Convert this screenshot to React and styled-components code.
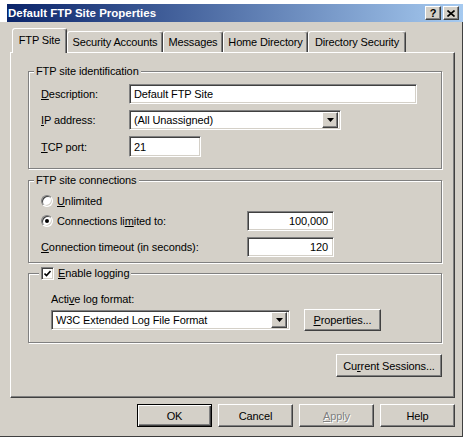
import styled, { createGlobalStyle, css } from "styled-components"

const GlobalStyle = createGlobalStyle`
  * { box-sizing: border-box; }
  html, body {
    margin: 0;
    padding: 0;
    background: #ffffff;
  }
  body {
    font-family: "Liberation Sans", Arial, sans-serif;
    font-size: 11px;
    color: #000000;
  }
`

const raised = css`
  border: 1px solid;
  border-color: #ffffff #404040 #404040 #ffffff;
  box-shadow: inset -1px -1px 0 #808080;
`

const sunken = css`
  border: 1px solid;
  border-color: #808080 #ffffff #ffffff #808080;
  box-shadow: inset 1px 1px 0 #404040, inset -1px -1px 0 #d4d0c8;
`

const Window = styled.div`
  margin-top: 4px;
  width: 463px;
  display: flex;
  flex-direction: column;
`

const TitleBar = styled.div`
  margin-left: 7px;
  height: 18px;
  background: linear-gradient(to right, #0a246a, #a6caf0);
  display: flex;
  align-items: center;
  justify-content: space-between;
  padding: 0 4px 0 1px;
`

const TitleText = styled.span`
  color: #ffffff;
  font-weight: 700;
  font-size: 11.5px;
  letter-spacing: 0;
`

const TitleButtons = styled.div`
  display: flex;
  gap: 2px;
`

const TitleButton = styled.div`
  ${raised};
  width: 16px;
  height: 14px;
  background: #d4d0c8;
  display: flex;
  align-items: center;
  justify-content: center;
  font-weight: 700;
  font-size: 11px;
  line-height: 1;
`

const Body = styled.div`
  height: 415px;
  background: #d4d0c8;
  border-right: 1px solid #404040;
  border-bottom: 1px solid #404040;
  padding: 6px 7px 9px 10px;
  display: flex;
  flex-direction: column;
`

const TabStrip = styled.div`
  height: 24px;
  padding-left: 2px;
  display: flex;
  align-items: flex-end;
  position: relative;
  z-index: 1;
`

const Tab = styled.div`
  width: ${(p) => p.$w}px;
  height: ${(p) => (p.$active ? 25 : 21)}px;
  margin-bottom: ${(p) => (p.$active ? -1 : 0)}px;
  background: #d4d0c8;
  border: 1px solid;
  border-bottom: none;
  border-color: #ffffff #404040 transparent #ffffff;
  border-radius: 3px 3px 0 0;
  box-shadow: inset -1px 0 0 #808080;
  display: flex;
  align-items: center;
  justify-content: center;
  padding-bottom: ${(p) => (p.$active ? 3 : 0)}px;
  white-space: nowrap;
  letter-spacing: -0.15px;
`

const Panel = styled.div`
  height: 346px;
  ${raised};
  padding: 18px 12px 0 17px;
  display: flex;
  flex-direction: column;
`

const Group = styled.div`
  position: relative;
  border: 1px solid #808080;
  box-shadow: inset 1px 1px 0 #ffffff, 1px 1px 0 #ffffff;
  padding: ${(p) => p.$pad};
  margin-bottom: ${(p) => p.$mb || 0}px;
  display: flex;
  flex-direction: column;
  gap: ${(p) => p.$gap || 0}px;
`

const Legend = styled.div`
  position: absolute;
  top: -7px;
  left: ${(p) => p.$left}px;
  padding: 0 2px;
  line-height: 13px;
  background: #d4d0c8;
  display: flex;
  align-items: center;
  gap: 4px;
  letter-spacing: -0.1px;
`

const Row = styled.div`
  display: flex;
  align-items: center;
  height: ${(p) => p.$h || 20}px;
  margin-top: ${(p) => p.$mt || 0}px;
`

const Label = styled.div`
  width: ${(p) => p.$w}px;
  display: flex;
  align-items: center;
  gap: 4px;
  letter-spacing: -0.1px;
  white-space: nowrap;
`

const Key = styled.span`
  text-decoration: underline;
`

const TextBox = styled.div`
  ${sunken};
  width: ${(p) => p.$w}px;
  height: ${(p) => p.$h || 20}px;
  background: #ffffff;
  display: flex;
  align-items: center;
  justify-content: ${(p) => (p.$right ? "flex-end" : "space-between")};
  padding: ${(p) => (p.$right ? "0 5px 0 4px" : "0 2px 0 4px")};
  white-space: nowrap;
  letter-spacing: -0.1px;
`

const DropButton = styled.div`
  ${raised};
  width: 16px;
  height: 16px;
  background: #d4d0c8;
  display: flex;
  align-items: center;
  justify-content: center;
`

const Radio = styled.span`
  ${sunken};
  width: 12px;
  height: 12px;
  border-radius: 50%;
  background: #ffffff;
  display: inline-flex;
  align-items: center;
  justify-content: center;
  flex-shrink: 0;
  &::after {
    content: "";
    width: 4px;
    height: 4px;
    border-radius: 50%;
    background: ${(p) => (p.$checked ? "#000000" : "transparent")};
  }
`

const Check = styled.span`
  ${sunken};
  width: 13px;
  height: 13px;
  background: #ffffff;
  display: inline-flex;
  align-items: center;
  justify-content: center;
  flex-shrink: 0;
`

const Button = styled.button`
  ${raised};
  width: ${(p) => p.$w}px;
  height: ${(p) => p.$h || 23}px;
  background: #d4d0c8;
  font-family: inherit;
  font-size: 11px;
  color: #000000;
  padding: 0;
  letter-spacing: -0.1px;
  white-space: nowrap;
  ${(p) =>
    p.$default &&
    css`
      border-color: #000000;
      box-shadow: inset 1px 1px 0 #ffffff, inset -1px -1px 0 #404040, inset -2px -2px 0 #808080;
    `}
  ${(p) =>
    p.disabled &&
    css`
      color: #808080;
      text-shadow: 1px 1px 0 #ffffff;
    `}
`

const SessionsRow = styled.div`
  display: flex;
  justify-content: flex-end;
  margin-top: 11px;
`

const ButtonRow = styled.div`
  display: flex;
  justify-content: flex-end;
  gap: 6px;
  margin-top: 6px;
`

const Arrow = () => (
  <svg width="7" height="4" viewBox="0 0 7 4">
    <path d="M0 0h7L3.5 4z" fill="#000" />
  </svg>
)

const Combo = ({ w, h, children }) => (
  <TextBox $w={w} $h={h}>
    <span>{children}</span>
    <DropButton>
      <Arrow />
    </DropButton>
  </TextBox>
)

const tabs = [
  { text: "FTP Site", w: 55 },
  { text: "Security Accounts", w: 96 },
  { text: "Messages", w: 60 },
  { text: "Home Directory", w: 85 },
  { text: "Directory Security", w: 98 },
]

export default function App() {
  return (
    <>
      <GlobalStyle />
      <Window>
        <TitleBar>
          <TitleText>Default FTP Site Properties</TitleText>
          <TitleButtons>
            <TitleButton>?</TitleButton>
            <TitleButton>
              <svg width="8" height="7" viewBox="0 0 8 7">
                <path d="M0.5 0.5L7.5 6.5M7.5 0.5L0.5 6.5" stroke="#000" strokeWidth="1.6" />
              </svg>
            </TitleButton>
          </TitleButtons>
        </TitleBar>
        <Body>
          <TabStrip>
            {tabs.map((t, i) => (
              <Tab key={t.text} $w={t.w} $active={i === 0}>
                {t.text}
              </Tab>
            ))}
          </TabStrip>
          <Panel>
            <Group $pad="12px 0 11px 12px" $gap={6} $mb={11}>
              <Legend $left={5}>FTP site identification</Legend>
              <Row>
                <Label $w={88}>
                  <span><Key>D</Key>escription:</span>
                </Label>
                <TextBox $w={288}>Default FTP Site</TextBox>
              </Row>
              <Row>
                <Label $w={88}>
                  <span><Key>I</Key>P address:</span>
                </Label>
                <Combo w={212}>(All Unassigned)</Combo>
              </Row>
              <Row $h={21}>
                <Label $w={88}>
                  <span><Key>T</Key>CP port:</span>
                </Label>
                <TextBox $w={72} $h={21}>21</TextBox>
              </Row>
            </Group>

            <Group $pad="13px 0 5px 12px" $mb={10}>
              <Legend $left={5}>FTP site connections</Legend>
              <Row $h={14}>
                <Label $w={206}>
                  <Radio />
                  <span><Key>U</Key>nlimited</span>
                </Label>
              </Row>
              <Row $mt={3}>
                <Label $w={206}>
                  <Radio $checked />
                  <span>Connections li<Key>m</Key>ited to:</span>
                </Label>
                <TextBox $w={87} $right>100,000</TextBox>
              </Row>
              <Row $mt={6}>
                <Label $w={206}>
                  <span><Key>C</Key>onnection timeout (in seconds):</span>
                </Label>
                <TextBox $w={87} $right>120</TextBox>
              </Row>
            </Group>

            <Group $pad="18px 0 11px 22px" $gap={4}>
              <Legend $left={10}>
                <Check>
                  <svg width="7" height="7" viewBox="0 0 7 7">
                    <path d="M0.5 3.5L2.5 5.5L6.5 1" stroke="#000" strokeWidth="1.6" fill="none" />
                  </svg>
                </Check>
                <span><Key>E</Key>nable logging</span>
              </Legend>
              <Row $h={13}>
                <Label $w={200}>
                  <span>Acti<Key>v</Key>e log format:</span>
                </Label>
              </Row>
              <Row $h={22}>
                <Combo w={239}>W3C Extended Log File Format</Combo>
                <div style={{ width: 14 }} />
                <Button $w={77} $h={22}>
                  <Key>P</Key>roperties...
                </Button>
              </Row>
            </Group>

            <SessionsRow>
              <Button $w={106}>
                Cu<Key>r</Key>rent Sessions...
              </Button>
            </SessionsRow>
          </Panel>
          <ButtonRow>
            <Button $w={75} $default>OK</Button>
            <Button $w={75}>Cancel</Button>
            <Button $w={75} disabled>
              <Key>A</Key>pply
            </Button>
            <Button $w={75}>Help</Button>
          </ButtonRow>
        </Body>
      </Window>
    </>
  )
}
